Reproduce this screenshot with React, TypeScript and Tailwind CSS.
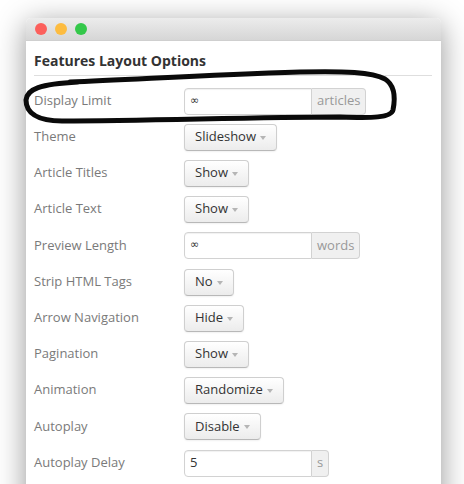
type Row =
  | { label: string; kind: "input"; value: string; addon: string }
  | { label: string; kind: "select"; value: string };

const rows: Row[] = [
  { label: "Display Limit", kind: "input", value: "∞", addon: "articles" },
  { label: "Theme", kind: "select", value: "Slideshow" },
  { label: "Article Titles", kind: "select", value: "Show" },
  { label: "Article Text", kind: "select", value: "Show" },
  { label: "Preview Length", kind: "input", value: "∞", addon: "words" },
  { label: "Strip HTML Tags", kind: "select", value: "No" },
  { label: "Arrow Navigation", kind: "select", value: "Hide" },
  { label: "Pagination", kind: "select", value: "Show" },
  { label: "Animation", kind: "select", value: "Randomize" },
  { label: "Autoplay", kind: "select", value: "Disable" },
  { label: "Autoplay Delay", kind: "input", value: "5", addon: "s" },
];

function SelectButton({ value }: { value: string }) {
  return (
    <div className="flex h-[27px] items-center rounded-[4px] border border-[#cfcfcf] border-b-[#b8b8b8] bg-gradient-to-b from-white to-[#ececec] pl-[10px] pr-[10px] text-[13px] text-[#333] shadow-[0_1px_2px_rgba(0,0,0,0.06)]">
      <span>{value}</span>
      <span className="ml-[4px] mt-[1px] h-0 w-0 border-x-[3.5px] border-t-[4px] border-x-transparent border-t-[#b5b5b5]" />
    </div>
  );
}

function AddonInput({ value, addon }: { value: string; addon: string }) {
  return (
    <div className="flex h-[27px]">
      <div className="flex w-[128px] items-center rounded-l-[4px] border border-[#d2d2d2] bg-white pl-[5px] text-[13px] text-[#333] shadow-[inset_0_1px_1px_rgba(0,0,0,0.06)]">
        {value === "∞" ? <span className="text-[11px] font-['DejaVu_Sans',sans-serif]">∞</span> : value}
      </div>
      <div className="flex items-center rounded-r-[4px] border border-l-0 border-[#d2d2d2] bg-[#f0f0f0] px-[5px] text-[13px] text-[#999]">
        {addon}
      </div>
    </div>
  );
}

export default function App() {
  return (
    <div className="relative h-[484px] w-[464px] overflow-hidden bg-white font-['Open_Sans','Liberation_Sans',sans-serif]">
      <div className="ml-[26px] mt-[18px] w-[415px] rounded-t-[5px] bg-white pb-10 shadow-[0_6px_30px_rgba(0,0,0,0.42)]">
        {/* title bar */}
        <div className="flex h-[23px] items-center gap-[8px] rounded-t-[5px] border-b border-[#cfcfcf] bg-gradient-to-b from-[#ececec] to-[#d6d6d6] pl-[9px]">
          <span className="h-[12px] w-[12px] rounded-full bg-[#fc605c]" />
          <span className="h-[12px] w-[12px] rounded-full bg-[#fdbc40]" />
          <span className="h-[12px] w-[12px] rounded-full bg-[#34c84a]" />
        </div>

        <div className="pl-[8px] pr-[9px] pt-[10px]">
          <h2 className="border-b border-[#dedede] pb-[4px] text-[14px] font-bold leading-[20px] text-[#333]">
            Features Layout Options
          </h2>
          <div className="mt-[7px]">
            {rows.map((row, i) => (
              <div key={row.label} className={`flex items-center ${i === 4 || i === 9 ? "h-[37px]" : "h-[36px]"}`}>
                <div className="w-[150px] text-[13px] text-[#7a7a7a]">{row.label}</div>
                {row.kind === "input" ? (
                  <AddonInput value={row.value} addon={row.addon} />
                ) : (
                  <SelectButton value={row.value} />
                )}
              </div>
            ))}
          </div>
        </div>
      </div>

      {/* hand-drawn marker loop */}
      <svg className="pointer-events-none absolute left-0 top-0" width="464" height="484" viewBox="0 0 464 484">
        <path
          d="M 70 82 C 130 80 200 75 300 72 C 345 71 372 72 385 79 C 396 86 395 100 393 110 C 391 118 372 118 340 117 C 250 117 150 121 62 121 C 36 121 26 112 26 100 C 27 89 40 84 78 82"
          fill="none"
          stroke="#0a0a0a"
          strokeWidth="5"
          strokeLinecap="round"
          strokeLinejoin="round"
        />
      </svg>
    </div>
  );
}
